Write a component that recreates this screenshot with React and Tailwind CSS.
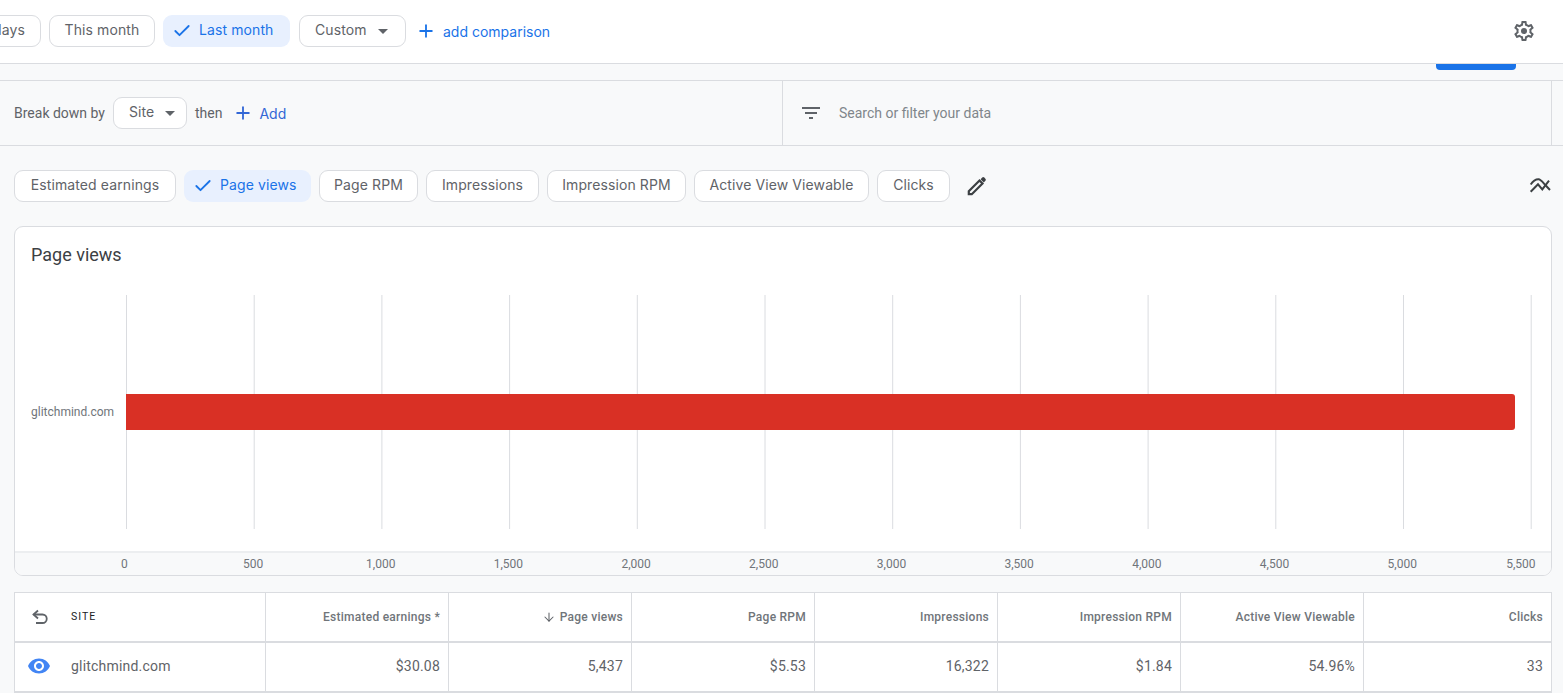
import { Plus, Check, ArrowDown } from "lucide-react";

const chipFont = "font-['Inter',sans-serif]";
const metrics = [
  { label: "Estimated earnings", w: "w-[162px]" },
  { label: "Page views", w: "w-[127px]", active: true },
  { label: "Page RPM", w: "w-[99px]" },
  { label: "Impressions", w: "w-[113px]" },
  { label: "Impression RPM", w: "w-[139px]" },
  { label: "Active View Viewable", w: "w-[175px]" },
  { label: "Clicks", w: "w-[73px]" },
];
const axis = ["0", "500", "1,000", "1,500", "2,000", "2,500", "3,000", "3,500", "4,000", "4,500", "5,000", "5,500"];
const gridX = [0, 127.7, 255.4, 383.1, 510.8, 638.5, 766.2, 893.9, 1021.6, 1149.3, 1277, 1404.7];

const columns = [
  { head: "Estimated earnings *", value: "$30.08" },
  { head: "Page views", value: "5,437", sorted: true },
  { head: "Page RPM", value: "$5.53" },
  { head: "Impressions", value: "16,322" },
  { head: "Impression RPM", value: "$1.84" },
  { head: "Active View Viewable", value: "54.96%" },
  { head: "Clicks", value: "33" },
];

const Chip = ({ label, active, className = "", children }) => (
  <div
    className={`flex h-8 shrink-0 items-center whitespace-nowrap rounded-[9px] pb-[3px] text-[14px] tracking-[0.1px] ${chipFont} ${
      active ? "bg-[#e8f0fe] pl-[9px] text-[#1a73e8]" : "border border-[#dadce0] bg-white text-[#5f6368]"
    } ${className}`}
  >
    {active && <Check size={20} strokeWidth={2.2} className="mr-[7px] mt-[3px]" />}
    {label}
    {children}
  </div>
);

const Caret = () => <span className="ml-[11px] mt-[3px] h-0 w-0 border-x-[5px] border-t-[5px] border-x-transparent border-t-[#5f6368]" />;

const Gear = () => (
  <svg width="24" height="24" viewBox="0 0 24 24" fill="#5f6368">
    <path d="M19.43 12.98c.04-.32.07-.64.07-.98 0-.34-.03-.66-.07-.98l2.11-1.65c.19-.15.24-.42.12-.64l-2-3.46c-.09-.16-.26-.25-.44-.25-.06 0-.12.01-.17.03l-2.49 1c-.52-.4-1.08-.73-1.69-.98l-.38-2.65C14.46 2.18 14.25 2 14 2h-4c-.25 0-.46.18-.49.42l-.38 2.65c-.61.25-1.17.59-1.69.98l-2.49-1c-.06-.02-.12-.03-.18-.03-.17 0-.34.09-.43.25l-2 3.46c-.13.22-.07.49.12.64l2.11 1.65c-.04.32-.07.65-.07.98 0 .33.03.66.07.98l-2.11 1.65c-.19.15-.24.42-.12.64l2 3.46c.09.16.26.25.44.25.06 0 .12-.01.17-.03l2.49-1c.52.4 1.08.73 1.69.98l.38 2.65c.03.24.24.42.49.42h4c.25 0 .46-.18.49-.42l.38-2.65c.61-.25 1.17-.59 1.69-.98l2.49 1c.06.02.12.03.18.03.17 0 .34-.09.43-.25l2-3.46c.12-.22.07-.49-.12-.64l-2.11-1.65zm-1.98-1.71c.04.31.05.52.05.73 0 .21-.02.43-.05.73l-.14 1.13.89.7 1.08.84-.7 1.21-1.27-.51-1.04-.42-.9.68c-.43.32-.84.56-1.25.73l-1.06.43-.16 1.13-.2 1.35h-1.4l-.19-1.35-.16-1.13-1.06-.43c-.43-.18-.83-.41-1.23-.71l-.91-.7-1.06.43-1.27.51-.7-1.21 1.08-.84.89-.7-.14-1.13c-.03-.31-.05-.54-.05-.74s.02-.43.05-.73l.14-1.13-.89-.7-1.08-.84.7-1.21 1.27.51 1.04.42.9-.68c.43-.32.84-.56 1.25-.73l1.06-.43.16-1.13.2-1.35h1.39l.19 1.35.16 1.13 1.06.43c.43.18.83.41 1.23.71l.91.7 1.06-.43 1.27-.51.7 1.21-1.07.85-.89.7.14 1.13z" />
    <circle cx="12" cy="12" r="3" />
  </svg>
);

const Pencil = () => (
  <svg width="24" height="24" viewBox="0 0 24 24">
    <path d="M3.8 20.2v-3L14.5 6.5l3 3L6.8 20.2z" fill="none" stroke="#3c4043" strokeWidth="2.2" />
    <path d="M15.6 5.2l1.6-1.6a1.5 1.5 0 0 1 2.1 0l1.1 1.1a1.5 1.5 0 0 1 0 2.1l-1.6 1.6z" fill="#3c4043" />
  </svg>
);

const CompareIcon = () => (
  <svg width="22" height="16" viewBox="0 0 22 16" fill="none" stroke="#3c4043" strokeWidth="2">
    <path d="M1.7 6.5C4 3 7 1.2 9.6 1.3c2.2.1 4.5 3.4 6.7 5.7L21 12" />
    <path d="M1.7 13.7L9 6.3l4.3 5L20 2.6" />
  </svg>
);

const FilterIcon = () => (
  <svg width="24" height="24" viewBox="0 0 24 24" fill="#5f6368">
    <path d="M10 18h4v-2h-4v2zM3 6v2h18V6H3zm3 7h12v-2H6v2z" />
  </svg>
);

const UndoIcon = () => (
  <svg width="20" height="20" viewBox="0 0 20 20" fill="none" stroke="#5f6368" strokeWidth="1.8">
    <path d="M8 3.5L3.5 7.5 8 11.5" />
    <path d="M3.5 7.5h9a4.2 4.2 0 0 1 0 8.5H6" />
  </svg>
);

const EyeIcon = () => (
  <svg width="24" height="24" viewBox="0 0 24 24" fill="#4285f4">
    <path d="M12 4.5C7 4.5 2.73 7.61 1 12c1.73 4.39 6 7.5 11 7.5s9.27-3.11 11-7.5c-1.73-4.39-6-7.5-11-7.5zM12 17c-2.76 0-5-2.24-5-5s2.24-5 5-5 5 2.24 5 5-2.24 5-5 5zm0-8c-1.66 0-3 1.34-3 3s1.34 3 3 3 3-1.34 3-3-1.34-3-3-3z" />
  </svg>
);

export default function App() {
  return (
    <div className="h-[693px] w-[1563px] overflow-hidden bg-[#f8f9fa] font-['Roboto',sans-serif]">
      {/* date range bar */}
      <div className="flex h-[64px] items-center border-b border-[#dadce0] bg-white pb-[1px]">
        <div className="ml-[-60px] flex items-center">
          <Chip label="Last 7 days" className="w-[101px] justify-end pr-[15px]" />
          <Chip label="This month" className="ml-2 w-[106px] justify-center" />
          <Chip label="Last month" active className="ml-2 w-[127px]" />
          <Chip label="Custom" className="ml-[9px] w-[107px] pl-[15px]">
            <Caret />
          </Chip>
        </div>
        <div className={`ml-[10px] flex items-center text-[14px] text-[#1a73e8] ${chipFont}`}>
          <Plus size={20} strokeWidth={2.2} className="mr-[7px]" />
          <span className="mt-[1px]">add comparison</span>
        </div>
        <div className="ml-auto mr-[27px]">
          <Gear />
        </div>
      </div>

      {/* strip under the bar */}
      <div className="relative h-[17px] border-b border-[#dadce0]">
        <div className="absolute left-[1436px] top-0 h-[6px] w-[80px] rounded-b-[4px] bg-[#1a73e8]" />
      </div>

      {/* break down + filter */}
      <div className="flex h-[65px] border-b border-[#dadce0] text-[14px] text-[#5f6368]">
        <div className="flex w-[783px] items-center border-r border-[#dadce0] pl-[14px]">
          <span>Break down by</span>
          <Chip label="Site" className="ml-2 w-[74px] pl-[15px]">
            <Caret />
          </Chip>
          <span className="ml-2">then</span>
          <Plus size={20} strokeWidth={2.2} className="ml-[11px] text-[#3367d6]" />
          <span className={`ml-[6px] text-[#3367d6] ${chipFont}`}>Add</span>
        </div>
        <div className="flex w-[769px] items-center border-r border-[#dadce0] pl-4">
          <FilterIcon />
          <span className="ml-4 text-[#80868b]">Search or filter your data</span>
        </div>
      </div>

      {/* metric chips */}
      <div className="flex h-[80px] items-center pl-[14px]">
        <div className="flex items-center gap-2">
          {metrics.map((m) => (
            <Chip key={m.label} label={m.label} active={m.active} className={`${m.w} ${m.active ? "" : "justify-center"}`} />
          ))}
        </div>
        <div className="ml-[15px]">
          <Pencil />
        </div>
        <div className="ml-auto mr-3">
          <CompareIcon />
        </div>
      </div>

      {/* chart card */}
      <div className="ml-[14px] mr-[11px] h-[350px] overflow-hidden rounded-[9px] border border-[#dadce0] bg-white">
        <div className="h-[68px] pl-4 pt-[15px] text-[18px] leading-[26px] text-[#3c4043]">Page views</div>
        <div className="flex h-[234px] items-center">
          <div className="w-[111px] pl-4 text-[12px] text-[#70757a]">glitchmind.com</div>
          <svg width="1425" height="234" viewBox="0 0 1425 234">
            {gridX.map((x) => (
              <line key={x} x1={x + 0.5} x2={x + 0.5} y1="0" y2="234" stroke="#dadce0" strokeWidth="1" />
            ))}
            <path d="M0 99H1386a3 3 0 0 1 3 3V132a3 3 0 0 1-3 3H0z" fill="#d93025" />
          </svg>
        </div>
        <div className="mt-[22px] flex h-[25px] items-center border-t-2 border-[#eceef0] bg-[#f8f9fa] pb-[2px] pl-[46.5px] text-[12px] text-[#70757a]">
          {axis.map((a, i) => (
            <div key={a} className={`w-[127.7px] shrink-0 text-center ${i === 0 ? "pr-[2px]" : ""} ${i === 11 ? "pr-[18px]" : ""}`}>{a}</div>
          ))}
        </div>
      </div>

      {/* table */}
      <div className="ml-[14px] mr-[11px] mt-4 border border-[#dadce0] bg-white">
        <div className="grid h-[50px] grid-cols-[250px_repeat(6,183px)_1fr] border-b-2 border-[#dadce0]">
          <div className="flex items-center pl-[15px] text-[#202124]">
            <UndoIcon />
            <span className="ml-[21px] text-[10.5px] tracking-[1px]">SITE</span>
          </div>
          {columns.map((c) => (
            <div key={c.head} className="flex items-center justify-end border-l border-[#dadce0] pr-2 text-[12px] font-medium tracking-[0.25px] text-[#70757a]">
              {c.sorted && <ArrowDown size={14} strokeWidth={1.8} className="mr-[4px] text-[#5f6368]" />}
              {c.head}
            </div>
          ))}
        </div>
        <div className="grid h-[49px] grid-cols-[250px_repeat(6,183px)_1fr] border-b border-[#dadce0] text-[14px] tracking-[0.2px] text-[#5f6368]">
          <div className="flex items-center pb-[2px] pl-[12px]">
            <EyeIcon />
            <span className="ml-5">glitchmind.com</span>
          </div>
          {columns.map((c) => (
            <div key={c.head} className="flex items-center justify-end border-l border-[#dadce0] pb-[2px] pr-2">{c.value}</div>
          ))}
        </div>
      </div>
    </div>
  );
}
